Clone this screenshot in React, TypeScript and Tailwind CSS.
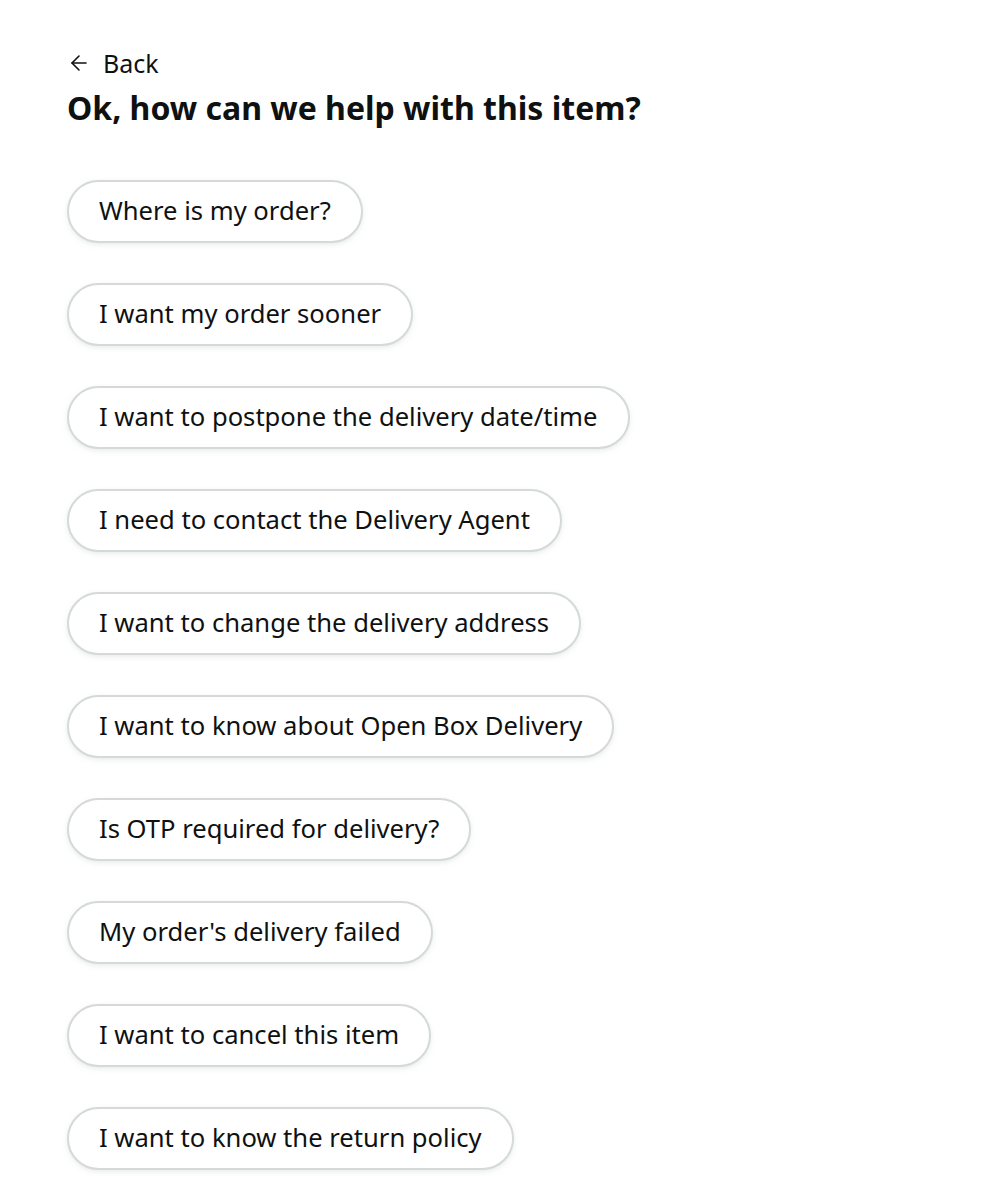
import { ArrowLeft } from "lucide-react"

const options = [
  "Where is my order?",
  "I want my order sooner",
  "I want to postpone the delivery date/time",
  "I need to contact the Delivery Agent",
  "I want to change the delivery address",
  "I want to know about Open Box Delivery",
  "Is OTP required for delivery?",
  "My order's delivery failed",
  "I want to cancel this item",
  "I want to know the return policy",
]

export default function App() {
  return (
    <div className="min-h-[1200px] bg-white px-[67px] pt-[46px] text-[#0f1111] font-['Noto_Sans',sans-serif]">
      <button className="flex items-center gap-[12px] text-[25px] leading-[34px]">
        <ArrowLeft className="h-[24px] w-[24px]" strokeWidth={1.6} />
        <span>Back</span>
      </button>
      <h1 className="mt-[6px] text-[32px] font-bold leading-[44px]">Ok, how can we help with this item?</h1>

      <div className="mt-[50px] flex flex-col items-start gap-[40px]">
        {options.map((label) => (
          <button
            key={label}
            className="h-[63px] rounded-full border-2 border-[#d5d9d9] bg-white px-[30px] text-[25.6px] shadow-[0_2px_5px_rgba(213,217,217,0.5)]"
          >
            {label}
          </button>
        ))}
      </div>
    </div>
  )
}
